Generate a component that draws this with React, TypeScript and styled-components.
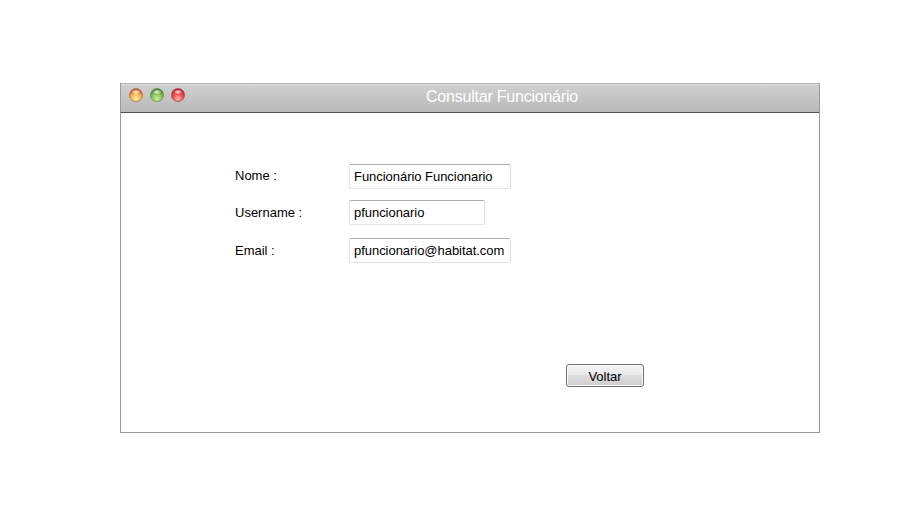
import React, { useId } from "react";
import styled, { createGlobalStyle } from "styled-components";

const GlobalStyle = createGlobalStyle`
  *, *::before, *::after { box-sizing: border-box; }
  body {
    margin: 0;
    background: #fff;
    color: #000;
    font-family: "Liberation Sans", Arial, sans-serif;
  }
`;

const Page = styled.main`
  height: 520px;
  padding: 83px 90px 0 120px;
`;

const Window = styled.section`
  height: 350px;
  border: 1px solid #999;
  border-top: 0;
`;

const TitleBar = styled.header`
  display: grid;
  grid-template-columns: 64px 1fr 0;
  height: 30px;
  border-top: 1px solid #b5b5b5;
  border-bottom: 1px solid #515151;
  background: linear-gradient(#dcdcdc 0, #dcdcdc 1px, #cfcfcf 1px, #b9b9b9 100%);
`;

const Lights = styled.div`
  display: flex;
  gap: 5px;
  padding: 3px 0 0 7px;
`;

const Light = styled.svg`
  display: block;
  flex: none;
  width: 16px;
  height: 16px;
`;

const Title = styled.h1`
  margin: 0 0 0 241px;
  color: #fff;
  font-size: 16px;
  font-weight: 400;
  letter-spacing: -0.22px;
  line-height: 25px;
  white-space: nowrap;
`;

const Form = styled.form`
  padding: 51px 0 0 114px;
`;

const Field = styled.div<{ $gap: number }>`
  display: grid;
  grid-template-columns: 114px max-content;
  height: 25px;
  margin-bottom: ${(p) => p.$gap}px;
`;

const Label = styled.label<{ $line: number }>`
  font-size: 13px;
  line-height: ${(p) => p.$line}px;
`;

const Input = styled.input<{ $width: number }>`
  width: ${(p) => p.$width}px;
  height: 25px;
  padding: 0 4px;
  border: 1px solid #e2e3ea;
  border-top-color: #abadb3;
  border-right-color: #dbdfe6;
  border-radius: 2px;
  outline: none;
  background: #fff;
  color: #000;
  font: 13px "Liberation Sans", Arial, sans-serif;
  letter-spacing: -0.04px;
`;

const Actions = styled.div`
  display: flex;
  padding: 101px 0 0 331px;
`;

const Button = styled.button`
  width: 78px;
  height: 23px;
  padding: 2px 0 0;
  border: 1px solid #707070;
  border-radius: 3px;
  background: linear-gradient(#f2f2f2 0, #ebebeb 50%, #dddddd 50%, #cfcfcf 100%);
  box-shadow: inset 0 0 0 1px #fafafa;
  color: #000;
  font: 13px/18px "Liberation Sans", Arial, sans-serif;
`;

type Tone = { rim: string; edge: string; middle: string; glow: string };

const tones: Tone[] = [
  { rim: "#a86a4c", edge: "#b8431c", middle: "#f0b052", glow: "#fff3a0" },
  { rim: "#64854f", edge: "#3a7326", middle: "#85c25b", glow: "#caf095" },
  { rim: "#9c4a4c", edge: "#a51822", middle: "#f0474a", glow: "#ffb8ae" },
];

function Orb({ tone }: { tone: Tone }) {
  const id = useId();
  return (
    <Light viewBox="0 0 16 16" aria-hidden="true">
      <defs>
        <radialGradient id={`${id}-body`} cx=".5" cy=".78" r=".8">
          <stop offset="0" stopColor={tone.glow} />
          <stop offset=".5" stopColor={tone.middle} />
          <stop offset="1" stopColor={tone.edge} />
        </radialGradient>
        <radialGradient id={`${id}-shine`} cx=".5" cy=".5" r=".55">
          <stop offset="0" stopColor="#fff" stopOpacity=".9" />
          <stop offset="1" stopColor="#fff" stopOpacity="0" />
        </radialGradient>
      </defs>
      <circle cx="8" cy="8" r="6.6" fill={`url(#${id}-body)`} stroke={tone.rim} strokeOpacity=".7" strokeWidth=".9" />
      <ellipse cx="8" cy="5" rx="4" ry="2.4" fill={`url(#${id}-shine)`} />
    </Light>
  );
}

const fields = [
  { id: "nome", label: "Nome :", value: "Funcionário Funcionario", width: 162, gap: 11, line: 23 },
  { id: "username", label: "Username :", value: "pfuncionario", width: 136, gap: 13, line: 25 },
  { id: "email", label: "Email :", value: "pfuncionario@habitat.com", width: 162, gap: 0, line: 25 },
];

export default function App() {
  return (
    <>
      <GlobalStyle />
      <Page>
        <Window>
          <TitleBar>
            <Lights>
              {tones.map((tone) => (
                <Orb key={tone.rim} tone={tone} />
              ))}
            </Lights>
            <Title>Consultar Funcionário</Title>
          </TitleBar>
          <Form onSubmit={(e) => e.preventDefault()}>
            {fields.map((f) => (
              <Field key={f.id} $gap={f.gap}>
                <Label htmlFor={f.id} $line={f.line}>{f.label}</Label>
                <Input id={f.id} $width={f.width} defaultValue={f.value} readOnly />
              </Field>
            ))}
            <Actions>
              <Button type="button">Voltar</Button>
            </Actions>
          </Form>
        </Window>
      </Page>
    </>
  );
}
